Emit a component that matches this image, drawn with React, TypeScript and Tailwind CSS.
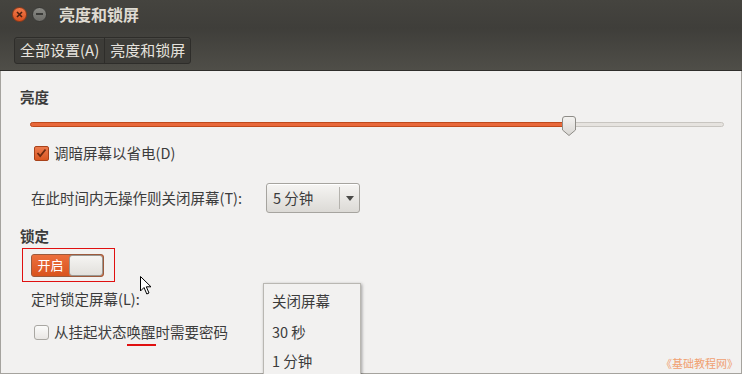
export default function App() {
  return (
    <div className="relative w-[742px] h-[374px] overflow-hidden bg-[#f2f1f0] font-['Noto_Sans_CJK_SC','Noto_Sans',sans-serif] text-[#3c3c3c]">
      {/* Title bar */}
      <div className="h-[28px] bg-gradient-to-b from-[#45443f] to-[#3f3e3a] flex items-center pl-[12px]">
        <div className="w-[15px] h-[15px] rounded-full bg-gradient-to-b from-[#f37a4a] to-[#d9501e] border border-[#8f3a18] flex items-center justify-center">
          <svg width="7" height="7" viewBox="0 0 7 7">
            <path d="M1 1 L6 6 M6 1 L1 6" stroke="#4a2010" strokeWidth="1.6" />
          </svg>
        </div>
        <div className="ml-[5px] w-[15px] h-[15px] rounded-full bg-gradient-to-b from-[#8a8a85] to-[#6c6c68] border border-[#3a3a37] flex items-center justify-center">
          <div className="w-[7px] h-[1.5px] bg-[#3a3a37]" />
        </div>
        <div className="ml-[12px] text-[16px] font-bold text-[#dfdbd2] leading-none">亮度和锁屏</div>
      </div>
      {/* Toolbar */}
      <div className="h-[43px] bg-gradient-to-b from-[#3f3e3a] to-[#4f4e48] pt-[9px] pl-[14px] border-b border-[#2f2e2b]">
        <div className="inline-flex h-[27px] rounded-[3px] border border-[#2e2d2a] bg-[#3d3c38] shadow-[inset_0_1px_0_rgba(255,255,255,0.06)]">
          <div className="px-[5px] flex items-center text-[15px] text-[#e6e3de] border-r border-[#2e2d2a]">全部设置(A)</div>
          <div className="px-[5px] flex items-center text-[15px] text-[#e6e3de]">亮度和锁屏</div>
        </div>
      </div>
      {/* Content */}
      <div className="h-[303px] border-l border-r border-b border-[#a5a39e] pl-[19px] pr-[18px] text-[14.5px]">
        <div className="pt-[16px] h-[37px] font-bold leading-[20px]">亮度</div>
        {/* slider */}
        <div className="relative h-[30px] ml-[10px]">
          <div className="absolute top-[14px] left-0 w-[694px] h-[5px] rounded-full bg-[#e6e3df] border border-[#c8c5c0]" />
          <div className="absolute top-[14px] left-0 w-[538px] h-[5px] rounded-full bg-[#e8683a] border border-[#c04a1c]" />
          <svg className="absolute left-[532px] top-[8px]" width="14" height="20" viewBox="0 0 14 20">
            <defs>
              <linearGradient id="th" x1="0" y1="0" x2="0" y2="1">
                <stop offset="0" stopColor="#f4f3f1" />
                <stop offset="1" stopColor="#d8d6d2" />
              </linearGradient>
            </defs>
            <path d="M3 0.5 H11 Q13.5 0.5 13.5 3 V14 L7 19.5 L0.5 14 V3 Q0.5 0.5 3 0.5 Z" fill="url(#th)" stroke="#8e8c87" />
          </svg>
        </div>
        {/* checkbox dim */}
        <div className="ml-[14px] h-[30px] flex items-center">
          <div className="w-[15px] h-[15px] rounded-[2px] bg-gradient-to-b from-[#ec7a4c] to-[#d9561f] border border-[#a8421a] flex items-center justify-center">
            <svg width="11" height="10" viewBox="0 0 11 10">
              <path d="M1.5 5 L4.2 8 L9.5 1.5" fill="none" stroke="#6b2a10" strokeWidth="1.8" />
            </svg>
          </div>
          <span className="ml-[5px]">调暗屏幕以省电(D)</span>
        </div>
        {/* blank timeout */}
        <div className="ml-[11px] mt-[15px] h-[30px] flex items-center">
          <span className="w-[235px] whitespace-nowrap">在此时间内无操作则关闭屏幕(T):</span>
          <div className="w-[94px] h-[30px] rounded-[3px] border border-[#a6a49f] bg-gradient-to-b from-[#f6f5f3] to-[#dcdad6] flex items-center shadow-[inset_0_1px_0_#fff]">
            <span className="pl-[6px] w-[72px]">5 分钟</span>
            <div className="h-[22px] w-px bg-[#b4b2ad]" />
            <div className="flex-1 flex justify-center">
              <svg width="8" height="5" viewBox="0 0 8 5"><path d="M0 0 H8 L4 5 Z" fill="#4a4a48" /></svg>
            </div>
          </div>
        </div>
        <div className="mt-[13px] h-[20px] font-bold leading-[20px]">锁定</div>
        {/* switch with red box */}
        <div className="mt-[2px] ml-[2px] w-[93px] h-[34px] border border-[#e01010] flex items-center pl-[8px]">
          <div className="w-[73px] h-[23px] rounded-[3px] border border-[#9c5a3c] flex overflow-hidden bg-[#e6622f]">
            <div className="w-[37px] flex items-center justify-center text-[13px] text-white bg-gradient-to-b from-[#ec6f3c] to-[#d9531d]">开启</div>
            <div className="flex-1 rounded-[3px] border border-[#9a9893] bg-gradient-to-b from-[#f5f4f2] to-[#e2e0dc]" />
          </div>
        </div>
        <div className="ml-[11px] mt-[5px] h-[24px] flex items-center">定时锁定屏幕(L):</div>
        <div className="ml-[14px] mt-[11px] h-[20px] flex items-center">
          <div className="w-[15px] h-[15px] rounded-[3px] bg-gradient-to-b from-[#fbfbfa] to-[#e9e7e4] border border-[#a9a7a2]" />
          <span className="ml-[5px] relative whitespace-nowrap">
            从挂起状态<span className="relative">唤醒<span className="absolute left-0 right-0 bottom-[-4px] h-[2px] bg-[#e01010]" /></span>时需要密码
          </span>
        </div>
      </div>
      {/* Dropdown menu */}
      <div className="absolute left-[263px] top-[283px] w-[98px] h-[100px] bg-[#f2f1f0] border border-[#b9b7b2] shadow-[1px_1px_3px_rgba(0,0,0,0.35)] pl-[8px] text-[14.5px]">
        <div className="h-[34px] pt-[7px] leading-[20px]">关闭屏幕</div>
        <div className="h-[30px] pt-[4px] leading-[20px]">30 秒</div>
        <div className="h-[30px] pt-[3px] leading-[20px]">1 分钟</div>
      </div>
      {/* Cursor */}
      <svg className="absolute left-[140px] top-[276px]" width="13" height="19" viewBox="0 0 13 19">
        <path d="M0.5 0.5 V15 L4 11.5 L6.8 18 L9 17 L6.3 10.8 H11 Z" fill="#fff" stroke="#000" strokeWidth="1" />
      </svg>
      {/* Watermark */}
      <div className="absolute left-[661px] top-[356px] text-[11px] leading-[14px] whitespace-nowrap text-[#f0a070]">《基础教程网》</div>
    </div>
  );
}
